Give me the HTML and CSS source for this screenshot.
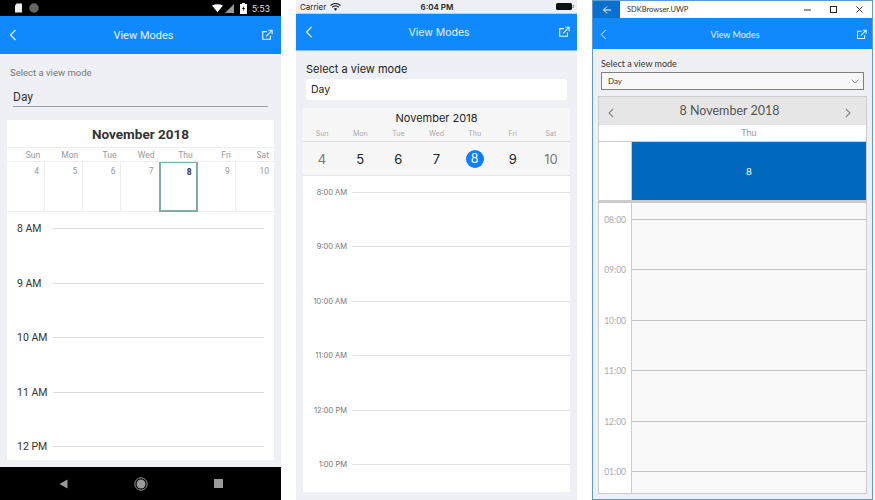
FILE: index.html
```html
<!DOCTYPE html>
<html>
<head>
<meta charset="utf-8">
<title>View Modes</title>
<link rel="stylesheet" href="styles.css">
</head>
<body>

<svg class="defs" width="0" height="0">
  <symbol id="back" viewBox="0 0 10 14"><path d="M7.500 2 L2.500 7 L7.500 12" fill="none" stroke="currentColor" stroke-width="1.100"/></symbol>
  <symbol id="share" viewBox="0 0 14 14"><path d="M7 3 H2 V12 H11 V7.500 M6 8.500 L12 2.500 M8.500 1.500 H13 V6" fill="none" stroke="currentColor" stroke-width="1.300"/></symbol>
</svg>

<div class="screens">

  <!-- android -->
  <div class="screen android">
    <div class="status">
      <div class="status-left">
        <svg width="9" height="10" viewBox="0 0 9 10"><path d="M2.500 0.500 H8 V9.500 H1 V2.500 Z" fill="#eee"/></svg>
        <svg width="10" height="10" viewBox="0 0 10 10"><circle cx="5" cy="5" r="4.700" fill="#666"/></svg>
      </div>
      <div class="status-right">
        <svg class="wifi" width="11" height="9" viewBox="0 0 13 10"><path d="M0 1.500 Q6.500 -1.500 13 1.500 L6.500 9.500 Z" fill="#fff"/></svg>
        <svg width="9" height="9" viewBox="0 0 9 9"><path d="M9 0 V9 H0 Z" fill="#999"/></svg>
        <svg class="batt" width="7" height="11" viewBox="0 0 7 11"><path d="M2 0 H5 V1 H7 V11 H0 V1 H2 Z" fill="#fff"/><path d="M3.800 3 L2 6 H3.300 L3 8.500 L5 5 H3.700 Z" fill="#000"/></svg>
        <span>5:53</span>
      </div>
    </div>
    <div class="topbar">
      <svg class="ico-back" width="10" height="14"><use href="#back"/></svg>
      <span class="topbar-title">View Modes</span>
      <svg class="ico-share" width="12" height="12"><use href="#share"/></svg>
    </div>
    <div class="content">
      <div class="field-label">Select a view mode</div>
      <div class="picker">Day</div>
      <div class="calendar">
        <div class="cal-title">November 2018</div>
        <div class="week">
          <span>Sun</span><span>Mon</span><span>Tue</span><span>Wed</span><span>Thu</span><span>Fri</span><span>Sat</span>
        </div>
        <div class="days">
          <div class="day">4</div><div class="day">5</div><div class="day">6</div><div class="day">7</div><div class="day today">8</div><div class="day">9</div><div class="day">10</div>
        </div>
        <div class="timeline">
          <div class="hour"><span>8 AM</span><i></i></div>
          <div class="hour"><span>9 AM</span><i></i></div>
          <div class="hour"><span>10 AM</span><i></i></div>
          <div class="hour"><span>11 AM</span><i></i></div>
          <div class="hour"><span>12 PM</span><i></i></div>
        </div>
      </div>
    </div>
    <div class="navbar">
      <svg width="9" height="10" viewBox="0 0 9 10"><path d="M8.500 0.500 V9.500 L0.500 5 Z" fill="#9a9a9a"/></svg>
      <svg width="14" height="14" viewBox="0 0 14 14"><circle cx="7" cy="7" r="6.200" fill="none" stroke="#9a9a9a"/><circle cx="7" cy="7" r="4.500" fill="#9a9a9a"/></svg>
      <svg width="9" height="9" viewBox="0 0 9 9"><rect width="9" height="9" fill="#9a9a9a"/></svg>
    </div>
  </div>

  <!-- ios -->
  <div class="screen ios">
    <div class="status">
      <div class="status-left">
        <span>Carrier</span>
        <svg width="11" height="8" viewBox="0 0 11 8"><path d="M0.500 2.500 Q5.500 -1.500 10.500 2.500 M2.200 4.200 Q5.500 1.400 8.800 4.200" fill="none" stroke="#222" stroke-width="1.200"/><path d="M3.800 5.700 Q5.500 4.300 7.200 5.700 L5.500 7.800 Z" fill="#222"/></svg>
      </div>
      <span class="status-time">6:04 PM</span>
      <svg class="ios-batt" width="18" height="7" viewBox="0 0 18 7"><rect width="16" height="7" rx="1.500" fill="#111"/><rect x="16.500" y="2" width="1.500" height="3" fill="#999"/></svg>
    </div>
    <div class="topbar">
      <svg class="ico-back" width="10" height="14"><use href="#back"/></svg>
      <span class="topbar-title">View Modes</span>
      <svg class="ico-share" width="12" height="12"><use href="#share"/></svg>
    </div>
    <div class="content">
      <div class="field-label">Select a view mode</div>
      <div class="picker">Day</div>
      <div class="calendar">
        <div class="cal-head">
          <div class="cal-title">November 2018</div>
          <div class="week">
            <span>Sun</span><span>Mon</span><span>Tue</span><span>Wed</span><span>Thu</span><span>Fri</span><span>Sat</span>
          </div>
        </div>
        <div class="days">
          <div class="day muted">4</div><div class="day">5</div><div class="day">6</div><div class="day">7</div><div class="day"><b>8</b></div><div class="day">9</div><div class="day muted">10</div>
        </div>
        <div class="timeline">
          <div class="hour"><span>8:00 AM</span><i></i></div>
          <div class="hour"><span>9:00 AM</span><i></i></div>
          <div class="hour"><span>10:00 AM</span><i></i></div>
          <div class="hour"><span>11:00 AM</span><i></i></div>
          <div class="hour"><span>12:00 PM</span><i></i></div>
          <div class="hour"><span>1:00 PM</span><i></i></div>
        </div>
      </div>
    </div>
  </div>

  <!-- uwp -->
  <div class="screen uwp">
    <div class="titlebar">
      <div class="tb-back">
        <svg width="10" height="10" viewBox="0 0 10 10"><path d="M9 5 H1.500 M5 1.500 L1.500 5 L5 8.500" fill="none" stroke="#fff" stroke-width="1"/></svg>
      </div>
      <span class="tb-name">SDKBrowser.UWP</span>
      <div class="tb-controls">
        <svg width="7" height="7" viewBox="0 0 7 7"><path d="M0 4 H7" stroke="#333"/></svg>
        <svg width="7" height="7" viewBox="0 0 7 7"><rect x="0.500" y="0.500" width="6" height="6" fill="none" stroke="#222"/></svg>
        <svg width="7" height="7" viewBox="0 0 7 7"><path d="M0.500 0.500 L6.500 6.500 M6.500 0.500 L0.500 6.500" stroke="#333"/></svg>
      </div>
    </div>
    <div class="topbar">
      <svg class="ico-back" width="9" height="13"><use href="#back"/></svg>
      <span class="topbar-title">View Modes</span>
      <svg class="ico-share" width="11" height="11"><use href="#share"/></svg>
    </div>
    <div class="content">
      <div class="field-label">Select a view mode</div>
      <div class="picker">
        <span>Day</span>
        <svg width="8" height="5" viewBox="0 0 8 5"><path d="M0.500 0.500 L4 4 L7.500 0.500" fill="none" stroke="#999"/></svg>
      </div>
      <div class="calendar">
        <div class="cal-head">
          <svg width="6" height="10" viewBox="0 0 6 10"><path d="M5 1 L1 5 L5 9" fill="none" stroke="#888" stroke-width="1.100"/></svg>
          <span class="cal-title">8 November 2018</span>
          <svg width="6" height="10" viewBox="0 0 6 10"><path d="M1 1 L5 5 L1 9" fill="none" stroke="#888" stroke-width="1.100"/></svg>
        </div>
        <div class="week"><span>Thu</span></div>
        <div class="allday">
          <div class="allday-gutter"></div>
          <div class="allday-cell">8</div>
        </div>
        <div class="timeline">
          <div class="hour"><span>08:00</span><i></i></div>
          <div class="hour"><span>09:00</span><i></i></div>
          <div class="hour"><span>10:00</span><i></i></div>
          <div class="hour"><span>11:00</span><i></i></div>
          <div class="hour"><span>12:00</span><i></i></div>
          <div class="hour"><span>01:00</span><i></i></div>
        </div>
      </div>
    </div>
  </div>

</div>

</body>
</html>
```

FILE: styles.css
```css
html, body {
  margin: 0;
  padding: 0;
  background: #fff;
}

.defs {
  display: block;
  height: 0;
}

.screens {
  display: flex;
  gap: 15px;
  width: 875px;
  height: 500px;
  overflow: hidden;
}

.screen {
  width: 281px;
  height: 500px;
  flex: none;
  display: flex;
  flex-direction: column;
  box-sizing: border-box;
  background: #eff0f5;
  overflow: hidden;
}

.topbar {
  display: flex;
  align-items: center;
  justify-content: space-between;
  flex: none;
  box-sizing: border-box;
  background: #1089ff;
  color: #fff;
}

.topbar svg {
  flex: none;
  color: #e8f3ff;
}

.topbar-title {
  margin-left: 6px;
  color: #e6f2ff;
}

.timeline {
  flex: 1;
  overflow: hidden;
}

.hour {
  display: flex;
  align-items: flex-start;
}

.hour i {
  display: block;
  flex: 1;
  height: 1px;
}

/* android */
.android {
  font-family: Roboto, sans-serif;
}

.android .status {
  height: 16px;
  flex: none;
  background: #000;
  display: flex;
  align-items: center;
  justify-content: space-between;
  padding: 0 11px 0 14px;
}

.android .status-left {
  display: flex;
  align-items: center;
  gap: 6px;
}

.android .status-right {
  display: flex;
  align-items: center;
  color: #ddd;
  font-size: 9.500px;
}

.android .status-right .wifi {
  margin-right: 2px;
}

.android .status-right .batt {
  margin: 0 5px 0 6px;
}

.android .topbar {
  height: 38px;
  padding: 0 8px 0 8px;
}

.android .topbar-title {
  margin: 1px 0 0 8px;
  font-size: 11px;
}

.android .content {
  flex: 1;
  padding: 12px 7px 7px;
  display: flex;
  flex-direction: column;
  min-height: 0;
}

.android .field-label {
  font-size: 9.500px;
  line-height: 14px;
  color: #777;
  padding-left: 3px;
}

.android .picker {
  margin: 9px 6px 13px;
  font-size: 12px;
  line-height: 16px;
  color: #333;
  border-bottom: 1px solid #a0a0a0;
  padding-bottom: 1px;
}

.android .calendar {
  flex: 1;
  background: #fff;
  display: flex;
  flex-direction: column;
  min-height: 0;
}

.android .cal-title {
  height: 27px;
  line-height: 28px;
  text-align: center;
  font-size: 13.500px;
  font-weight: 700;
  color: #333;
  border-bottom: 1px solid #eee;
}

.android .week {
  display: grid;
  grid-template-columns: repeat(7, 1fr);
  height: 13px;
  border-bottom: 1px solid #eee;
}

.android .week span {
  text-align: right;
  font-size: 8.500px;
  line-height: 15px;
  color: #999;
  padding-right: 5px;
}

.android .days {
  display: grid;
  grid-template-columns: repeat(7, 1fr);
  height: 50px;
  flex: none;
  border-bottom: 1px solid #eee;
  box-sizing: border-box;
}

.android .day {
  text-align: right;
  font-size: 8.500px;
  line-height: 19px;
  color: #999;
  padding-right: 5px;
  border-right: 1px solid #eee;
}

.android .day:last-child {
  border-right: 0;
}

.android .day.today {
  margin: 0 0 -1px -1px;
  border: 2px solid #7eaea4;
  border-top-width: 1px;
  padding-right: 4px;
  font-weight: 700;
  color: #333;
}

.android .timeline {
  padding: 9px 10px 0 10px;
}

.android .hour {
  height: 54.500px;
}

.android .hour span {
  width: 36px;
  font-size: 10.500px;
  line-height: 16px;
  color: #333;
}

.android .hour i {
  margin-top: 7px;
  background: #ddd;
}

.navbar {
  height: 33px;
  flex: none;
  background: #000;
  display: flex;
  align-items: center;
  gap: 66px;
  padding-left: 59px;
}

/* ios */
.ios {
  font-family: Inter, sans-serif;
}

.ios .status {
  height: 13px;
  flex: none;
  display: grid;
  grid-template-columns: 1fr auto 1fr;
  align-items: center;
  padding: 0 3px 0 4px;
  font-size: 8px;
  color: #222;
  border-bottom: 1px solid #c9ced6;
}

.ios .status-left {
  display: flex;
  align-items: center;
  gap: 4px;
}

.ios .status-time {
  font-weight: 600;
}

.ios .ios-batt {
  justify-self: end;
}

.ios .topbar {
  height: 37px;
  padding: 0 7px 0 8px;
  border-bottom: 1px solid #86bdf2;
}

.ios .topbar-title {
  font-size: 10.500px;
}

.ios .content {
  flex: 1;
  padding: 11px 7px 8px;
  display: flex;
  flex-direction: column;
  min-height: 0;
}

.ios .field-label {
  font-size: 11px;
  line-height: 14px;
  color: #222;
  padding-left: 3px;
}

.ios .picker {
  margin: 3px 3px 8px;
  height: 21px;
  line-height: 21px;
  background: #fff;
  border-radius: 3px;
  padding-left: 5px;
  font-size: 10.500px;
  color: #222;
}

.ios .calendar {
  flex: 1;
  background: #fff;
  display: flex;
  flex-direction: column;
  min-height: 0;
}

.ios .cal-head {
  background: #f7f7f7;
  border-bottom: 1px solid #ddd;
}

.ios .cal-title {
  height: 20px;
  line-height: 20px;
  text-align: center;
  font-size: 11px;
  color: #222;
}

.ios .week {
  display: grid;
  grid-template-columns: repeat(7, 1fr);
  height: 13px;
}

.ios .week span {
  text-align: center;
  font-size: 7px;
  line-height: 12px;
  color: #aaa;
}

.ios .days {
  display: grid;
  grid-template-columns: repeat(7, 1fr);
  height: 34px;
  flex: none;
  background: #f7f7f7;
  border-bottom: 1px solid #e4e4e4;
  box-sizing: border-box;
}

.ios .day {
  display: flex;
  align-items: center;
  justify-content: center;
  font-size: 13px;
  color: #222;
}

.ios .day.muted {
  color: #777;
}

.ios .day b {
  width: 18px;
  height: 18px;
  border-radius: 50%;
  background: #0a7fff;
  color: #fff;
  font-weight: 400;
  font-size: 12.500px;
  line-height: 18px;
  text-align: center;
}

.ios .timeline {
  padding: 11px 0 0 0;
}

.ios .hour {
  height: 54.400px;
}

.ios .hour span {
  width: 44px;
  text-align: right;
  margin-right: 5px;
  font-size: 7.500px;
  line-height: 11px;
  color: #777;
}

.ios .hour i {
  margin-top: 5px;
  background: #e3e3e3;
}

/* uwp */
.uwp {
  font-family: Lato, sans-serif;
  border: 1px solid #5b9bd5;
}

.uwp .titlebar {
  height: 17px;
  flex: none;
  background: #fff;
  display: flex;
  align-items: center;
}

.tb-back {
  width: 27px;
  height: 17px;
  background: #0a6fcf;
  display: flex;
  align-items: center;
  justify-content: center;
}

.tb-name {
  margin-left: 7px;
  font-size: 7.500px;
  color: #333;
}

.tb-controls {
  margin-left: auto;
  display: flex;
  gap: 19px;
  padding-right: 9px;
}

.uwp .topbar {
  height: 31px;
  padding: 1px 5px 0 6px;
}

.uwp .topbar-title {
  font-size: 9px;
}

.uwp .content {
  flex: 1;
  padding: 9px 5px 5px;
  display: flex;
  flex-direction: column;
  min-height: 0;
}

.uwp .field-label {
  font-size: 9px;
  line-height: 12px;
  color: #333;
  padding-left: 3px;
}

.uwp .picker {
  margin: 2px 3px 6px;
  height: 18px;
  box-sizing: border-box;
  border: 1px solid #808080;
  background: #f8f8f8;
  display: flex;
  align-items: center;
  justify-content: space-between;
  padding: 0 4px 0 6px;
  font-size: 8px;
  color: #333;
}

.uwp .calendar {
  flex: 1;
  border: 1px solid #ccc;
  display: flex;
  flex-direction: column;
  min-height: 0;
  background: #fff;
}

.uwp .cal-head {
  height: 28px;
  flex: none;
  background: #e6e6e6;
  display: flex;
  align-items: center;
  justify-content: space-between;
  padding: 0 15px 0 9px;
}

.uwp .cal-head svg {
  margin-top: 4px;
}

.uwp .cal-title {
  padding-bottom: 2px;
  font-size: 12.500px;
  color: #555;
}

.uwp .week {
  height: 16px;
  flex: none;
  padding-left: 33px;
  text-align: center;
  font-size: 9px;
  line-height: 16px;
  color: #999;
}

.uwp .allday {
  height: 59px;
  flex: none;
  display: flex;
  border-top: 1px solid #ccc;
  box-sizing: border-box;
}

.allday-gutter {
  width: 32px;
  flex: none;
  border-right: 1px solid #ccc;
}

.allday-cell {
  flex: 1;
  background: #0068bd;
  color: #fff;
  font-size: 10px;
  display: flex;
  align-items: center;
  justify-content: center;
}

.uwp .timeline {
  border-top: 3px solid #ccc;
  background: linear-gradient(to right, #fff 32px, #ccc 32px, #ccc 33px, #f9f9f9 33px);
  padding-top: 10px;
}

.uwp .hour {
  height: 50.400px;
}

.uwp .hour span {
  width: 27px;
  flex: none;
  margin-right: 6px;
  text-align: right;
  font-size: 8.500px;
  line-height: 14px;
  color: #aaa;
}

.uwp .hour i {
  margin-top: 6px;
  height: 1px;
  background: #c4c4c4;
}
```
